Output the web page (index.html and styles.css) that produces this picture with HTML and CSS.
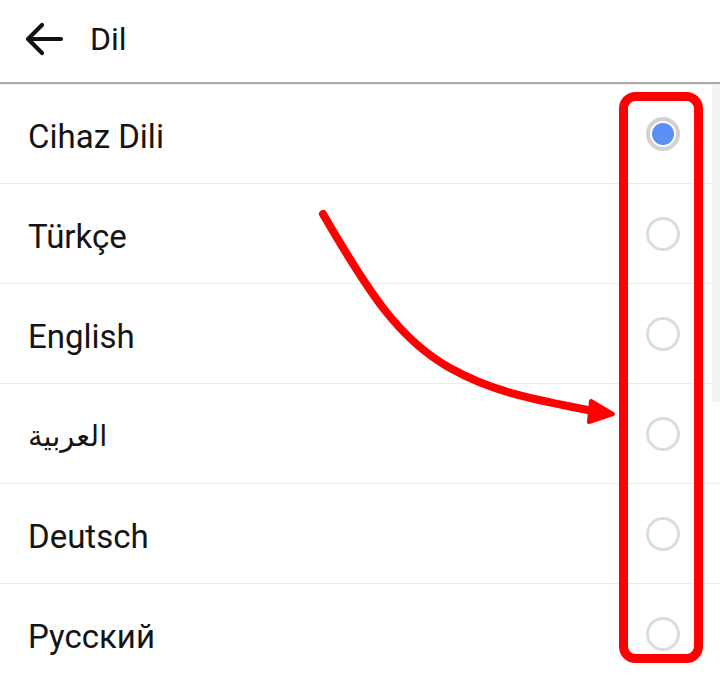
FILE: index.html
```html
<!DOCTYPE html>
<html lang="tr">
<head>
<meta charset="utf-8">
<title>Dil</title>
<link rel="stylesheet" href="styles.css">
</head>
<body>
<div class="screen">
  <header class="topbar">
    <svg class="back" width="40" height="36" viewBox="0 0 40 36">
      <path d="M37 18 H5 M18 4 L4 18 L18 32" fill="none" stroke="#111" stroke-width="4.2" stroke-linecap="round" stroke-linejoin="round"/>
    </svg>
    <h1 class="title">Dil</h1>
  </header>
  <ul class="list">
    <li class="row"><span class="label">Cihaz Dili</span><span class="radio checked"></span></li>
    <li class="row"><span class="label">Türkçe</span><span class="radio"></span></li>
    <li class="row"><span class="label">English</span><span class="radio"></span></li>
    <li class="row"><span class="label arabic" lang="ar">العربية</span><span class="radio"></span></li>
    <li class="row"><span class="label">Deutsch</span><span class="radio"></span></li>
    <li class="row"><span class="label">Русский</span><span class="radio"></span></li>
  </ul>
  <div class="scrollbar"></div>
  <svg class="annot" width="720" height="677" viewBox="0 0 720 677">
    <rect x="623.5" y="96.5" width="75" height="562" rx="12" ry="12" fill="none" stroke="#ff0000" stroke-width="9"/>
    <path d="M323 214 C 370 295, 400 340, 450 368 C 500 396, 550 402, 598 412" fill="none" stroke="#ff0000" stroke-width="8" stroke-linecap="round"/>
    <path d="M591 401 L613 414 L589 422 Z" fill="#ff0000" stroke="#ff0000" stroke-width="4" stroke-linejoin="round"/>
  </svg>
</div>
</body>
</html>
```

FILE: styles.css
```css
* { box-sizing: border-box; }
html, body {
  margin: 0;
  padding: 0;
  background: #ffffff;
}
body {
  font-family: Roboto, "Noto Sans", "DejaVu Sans", sans-serif;
  color: #141414;
}
.screen {
  position: relative;
  width: 720px;
  height: 677px;
  overflow: hidden;
}
.topbar {
  height: 84px;
  display: flex;
  align-items: center;
  padding-left: 24px;
  padding-bottom: 4px;
  border-bottom: 2px solid #a9a9a9;
  box-shadow: 0 1px 1px rgba(0,0,0,0.06);
}
.back {
  display: block;
  margin-right: 26px;
}
.title {
  margin: 0;
  font-size: 32px;
  font-weight: 400;
  line-height: 1;
}
.list {
  list-style: none;
  margin: 0;
  padding: 0;
}
.row {
  height: 100px;
  display: flex;
  align-items: center;
  justify-content: space-between;
  padding: 0 40px 0 28px;
  border-bottom: 1px solid #ebebeb;
}
.label {
  font-size: 33px;
  line-height: 1;
  padding-top: 5px;
}
.arabic {
  font-family: "DejaVu Sans", "Noto Sans", sans-serif;
  font-size: 29px;
}
.radio {
  width: 34px;
  height: 34px;
  border-radius: 50%;
  border: 3px solid #dcdcdc;
  display: flex;
  align-items: center;
  justify-content: center;
}
.radio.checked {
  border: 4px solid #d2d2d2;
}
.radio.checked::after {
  content: "";
  width: 22px;
  height: 22px;
  border-radius: 50%;
  background: #5b8ff4;
}
.scrollbar {
  position: absolute;
  top: 84px;
  right: 0;
  width: 8px;
  height: 318px;
  background: #f3f3f3;
}
.annot {
  position: absolute;
  top: 0;
  left: 0;
  pointer-events: none;
}
```
